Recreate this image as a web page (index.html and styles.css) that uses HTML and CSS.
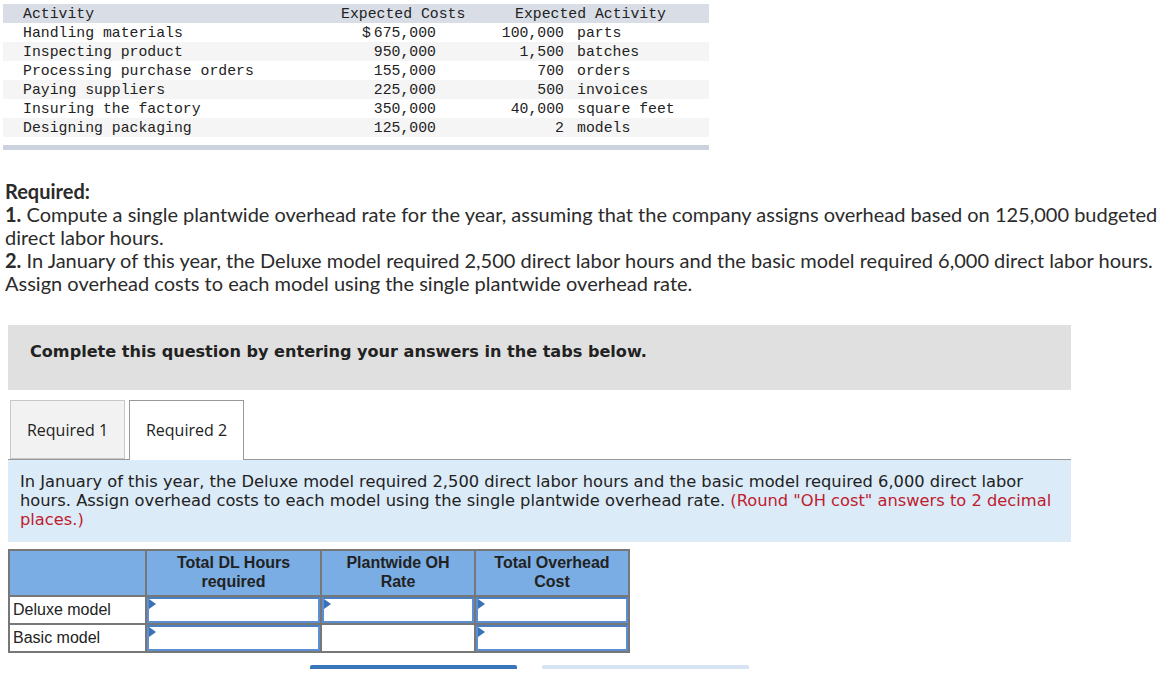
FILE: index.html
```html
<!DOCTYPE html>
<html>
<head>
<meta charset="utf-8">
<link rel="stylesheet" href="styles.css">
</head>
<body>
<div class="data">
  <div class="drow head">
    <span class="c1">Activity</span>
    <span class="hc2">Expected Costs</span>
    <span class="hc3">Expected Activity</span>
  </div>
  <div class="drow">
    <span class="c1">Handling materials</span><span class="c2"><span class="dollar">$</span>675,000</span><span class="c3">100,000</span><span class="c4">parts</span>
  </div>
  <div class="drow alt">
    <span class="c1">Inspecting product</span><span class="c2">950,000</span><span class="c3">1,500</span><span class="c4">batches</span>
  </div>
  <div class="drow">
    <span class="c1">Processing purchase orders</span><span class="c2">155,000</span><span class="c3">700</span><span class="c4">orders</span>
  </div>
  <div class="drow alt">
    <span class="c1">Paying suppliers</span><span class="c2">225,000</span><span class="c3">500</span><span class="c4">invoices</span>
  </div>
  <div class="drow">
    <span class="c1">Insuring the factory</span><span class="c2">350,000</span><span class="c3">40,000</span><span class="c4">square feet</span>
  </div>
  <div class="drow alt">
    <span class="c1">Designing packaging</span><span class="c2">125,000</span><span class="c3">2</span><span class="c4">models</span>
  </div>
  <div class="dfoot"></div>
</div>

<div class="req">
  <p class="req-title">Required:</p>
  <p><b>1.</b> Compute a single plantwide overhead rate for the year, assuming that the company assigns overhead based on 125,000 budgeted direct labor hours.</p>
  <p><b>2.</b> In January of this year, the Deluxe model required 2,500 direct labor hours and the basic model required 6,000 direct labor hours. Assign overhead costs to each model using the single plantwide overhead rate.</p>
</div>

<div class="complete">Complete this question by entering your answers in the tabs below.</div>

<div class="tabs">
  <div class="tab">Required 1</div>
  <div class="tab active">Required 2</div>
</div>

<div class="panel">
  In January of this year, the Deluxe model required 2,500 direct labor hours and the basic model required 6,000 direct labor hours. Assign overhead costs to each model using the single plantwide overhead rate. <span class="hint">(Round "OH cost" answers to 2 decimal places.)</span>
</div>

<table class="answer">
  <tr class="ahead">
    <th class="lab"></th>
    <th class="w2">Total DL Hours<br>required</th>
    <th class="w3">Plantwide OH<br>Rate</th>
    <th class="w4">Total Overhead<br>Cost</th>
  </tr>
  <tr>
    <td class="lab">Deluxe model</td>
    <td class="inp"><div class="box"><span class="mark"></span></div></td>
    <td class="inp"><div class="box"><span class="mark"></span></div></td>
    <td class="inp"><div class="box"><span class="mark"></span></div></td>
  </tr>
  <tr>
    <td class="lab">Basic model</td>
    <td class="inp"><div class="box"><span class="mark"></span></div></td>
    <td class="plain"></td>
    <td class="inp"><div class="box"><span class="mark"></span></div></td>
  </tr>
</table>

<div class="pager">
  <div class="pbar dark"></div>
  <div class="pbar light"></div>
</div>
</body>
</html>
```

FILE: styles.css
```css
* { box-sizing: border-box; }
body {
  margin: 0;
  padding: 4px 0 0 0;
  background: #fff;
  color: #222;
  width: 1170px;
  overflow: hidden;
}

/* top data table */
.data {
  margin-left: 3px;
  width: 706px;
  font-family: "Liberation Mono", "DejaVu Sans Mono", monospace;
  font-size: 14.8px;
  color: #222;
}
.drow {
  display: grid;
  grid-template-columns: 338px 95px 128px 1fr;
  height: 19px;
  padding-top: 2px;
  line-height: 17px;
  white-space: pre;
}
.drow.head {
  grid-template-columns: 338px 174px 1fr;
  background: #d9dde6;
}
.drow.alt { background: #f5f5f5; }
.c1 { padding-left: 20px; }
.c2 { text-align: right; }
.dollar { margin-right: 3px; }
.c3 { text-align: right; }
.c4 { padding-left: 13px; }
.dfoot {
  height: 5px;
  margin-top: 8px;
  background: #cdd3de;
}

/* required text */
.req {
  margin: 30px 0 0 5px;
  font-family: "Lato", "Open Sans", sans-serif;
  font-size: 20px;
  letter-spacing: 0;
  line-height: 23px;
  color: #2b2b2b;
}
.req p { margin: 0; }
.req-title { font-weight: bold; }
.req b { font-weight: bold; }

/* complete box */
.complete {
  margin: 30px 0 0 8px;
  width: 1063px;
  height: 65px;
  background: #e0e0e0;
  padding: 16px 0 0 22px;
  font-family: "DejaVu Sans", Verdana, sans-serif;
  font-weight: bold;
  font-size: 16.1px;
  line-height: 22px;
  color: #222;
}

/* tabs */
.tabs {
  display: flex;
  gap: 4px;
  margin: 10px 0 0 10px;
  height: 59px;
  align-items: flex-end;
}
.tab {
  width: 115px;
  height: 59px;
  border: 1px solid #c8c8c8;
  background: #f2f2f2;
  font-family: "Open Sans", "DejaVu Sans", sans-serif;
  font-size: 16px;
  color: #222;
  display: flex;
  align-items: center;
  justify-content: center;
}
.tab.active {
  background: #fff;
  border: 1px solid #999;
  border-bottom: none;
  height: 60px;
  margin-bottom: -1px;
  padding-bottom: 2px;
  position: relative;
  z-index: 1;
}

.panel {
  margin-left: 8px;
  width: 1063px;
  height: 83px;
  border-top: 1px solid #999;
  background: #dbebf8;
  padding: 12px 12px 0 12px;
  font-family: "DejaVu Sans", Verdana, sans-serif;
  font-size: 16.3px;
  line-height: 19px;
  color: #222;
}
.hint { color: #c0202e; }

/* answer table */
.answer {
  margin: 7px 0 0 8px;
  border-collapse: collapse;
  font-family: "Liberation Sans", Arial, sans-serif;
  font-size: 16px;
  color: #222;
}
.answer th, .answer td {
  border: 2px solid #777;
  padding: 0;
}
.ahead th {
  background: #7aade3;
  height: 46px;
  font-weight: bold;
  line-height: 19px;
  vertical-align: top;
  padding-top: 2px;
}
th.lab, td.lab { width: 137px; }
th.w2 { width: 175px; }
th.w3 { width: 154px; }
th.w4 { width: 154px; }
td.lab {
  text-align: left;
  padding-left: 3px;
  height: 28px;
}
td.inp { padding: 0; height: 28px; }
.box {
  position: relative;
  height: 26px;
  border: 2px solid #5b8fd1;
  border-top-color: #4a7fc4;
  background: #fff;
}
.mark {
  position: absolute;
  left: 0;
  top: 0;
  width: 0;
  height: 0;
  border-top: 5px solid transparent;
  border-bottom: 5px solid transparent;
  border-left: 7px solid #3a72b8;
}

.pager {
  display: flex;
  gap: 25px;
  margin: 12px 0 0 310px;
}
.pbar {
  width: 207px;
  height: 4px;
  border-radius: 2px 2px 0 0;
}
.pbar.dark { background: #3a75b9; }
.pbar.light { background: #d6e3f1; }
```
